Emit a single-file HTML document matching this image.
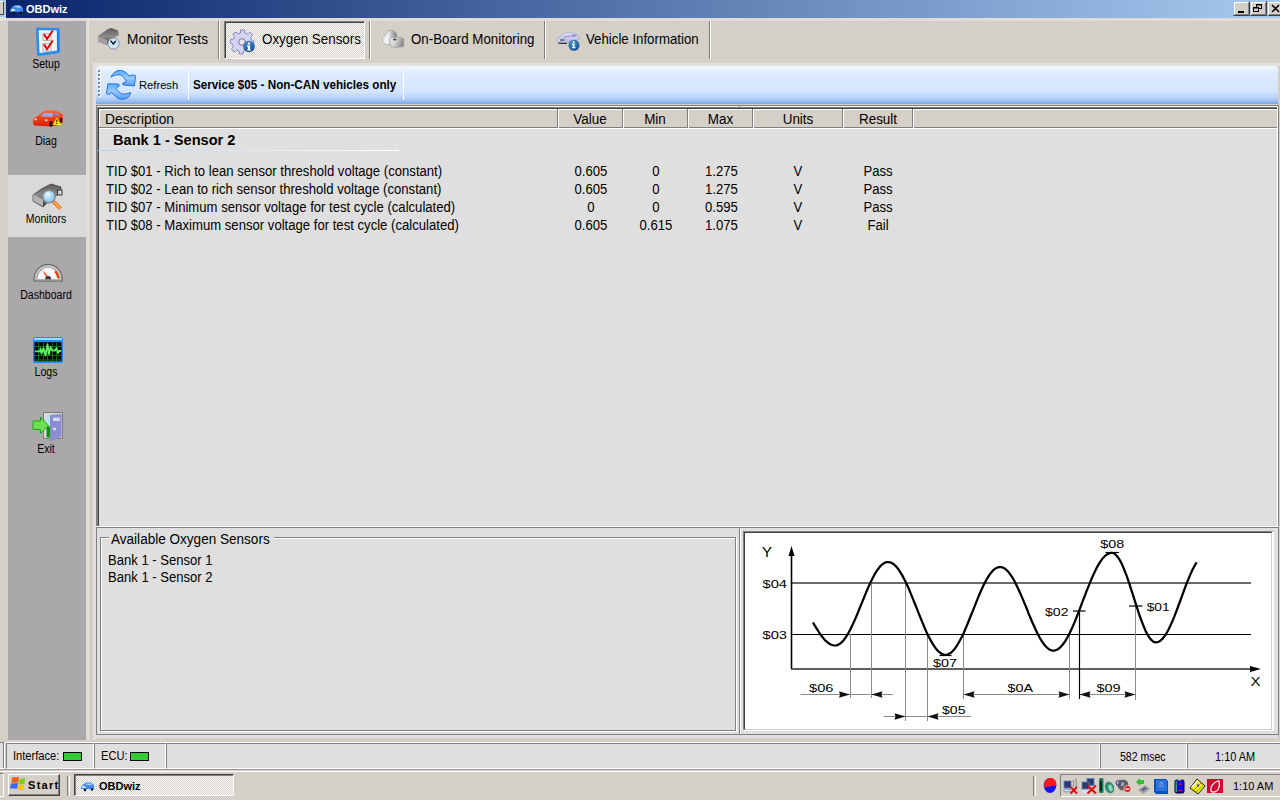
<!DOCTYPE html>
<html><head><meta charset="utf-8">
<style>
*{margin:0;padding:0;box-sizing:border-box}
html,body{width:1280px;height:800px;overflow:hidden;background:#D4D0C8;font-family:"Liberation Sans",sans-serif;color:#000}
.a{position:absolute}
.t{position:absolute;white-space:pre;line-height:1}
</style></head><body>

<!-- left edge of another window's title -->
<div class="a" style="left:0;top:0;width:6px;height:17px;background:#A6CAF0"></div>
<div class="a" style="left:0;top:1px;width:4px;height:14px;background:#D4D0C8;border-right:1px solid #404040;border-bottom:1px solid #404040;border-top:1px solid #fff"></div>
<div class="a" style="left:0;top:17px;width:6px;height:4px;background:#E2E1DD"></div>

<!-- title bar -->
<div class="a" style="left:6px;top:0;width:1274px;height:18px;background:linear-gradient(to right,#0A246A,#A6CAF0)"></div>
<div class="a" style="left:6px;top:18px;width:1274px;height:3px;background:#DFDCD7"></div>
<div id="titlecar" class="a" style="left:9px;top:3px;width:15px;height:11px"></div>
<div class="t" style="left:26px;top:3.69px;font-size:11px;font-weight:bold;color:#fff">OBDwiz</div>

<!-- sidebar -->
<div class="a" style="left:8px;top:21px;width:78px;height:719px;background:#ABA8AC"></div>
<div class="a" style="left:8px;top:175px;width:78px;height:62px;background:#D9D9D9"></div>
<div class="a" style="left:86px;top:21px;width:2px;height:719px;background:#DEDCD7"></div><div class="a" style="left:88px;top:19px;width:1px;height:721px;background:#E6E5E1"></div>
<div class="a" style="left:93px;top:63px;width:1187px;height:3px;background:#E2E1DE"></div><div class="a" style="left:93px;top:63px;width:3px;height:677px;background:#E0E0E0"></div>

<!-- sidebar labels -->
<div class="t" style="left:7px;top:57.84px;font-size:12px;width:78px;text-align:center;transform:scaleX(0.88);transform-origin:50% 0">Setup</div>
<div class="t" style="left:7px;top:134.84px;font-size:12px;width:78px;text-align:center;transform:scaleX(0.88);transform-origin:50% 0">Diag</div>
<div class="t" style="left:7px;top:212.84px;font-size:12px;width:78px;text-align:center;transform:scaleX(0.88);transform-origin:50% 0">Monitors</div>
<div class="t" style="left:7px;top:288.84px;font-size:12px;width:78px;text-align:center;transform:scaleX(0.88);transform-origin:50% 0">Dashboard</div>
<div class="t" style="left:7px;top:365.84px;font-size:12px;width:78px;text-align:center;transform:scaleX(0.88);transform-origin:50% 0">Logs</div>
<div class="t" style="left:7px;top:442.84px;font-size:12px;width:78px;text-align:center;transform:scaleX(0.88);transform-origin:50% 0">Exit</div>

<!-- toolstrip tabs -->
<div class="t" style="left:127px;top:32.15px;font-size:14px;transform:scaleX(0.976);transform-origin:0 0">Monitor Tests</div>
<div class="a" style="left:218px;top:21px;width:1px;height:38px;background:#808080"></div>
<div class="a" style="left:219px;top:21px;width:1px;height:38px;background:#fff"></div>
<div class="a" style="left:224px;top:21px;width:141px;height:38px;background:repeating-conic-gradient(#fff 0 25%,#D4D0C8 0 50%) 0 0/2px 2px;border-top:1px solid #808080;border-left:1px solid #808080;border-right:1px solid #fff;border-bottom:1px solid #fff;box-shadow:inset 1px 1px 0 #404040"></div>
<div class="t" style="left:262px;top:32.15px;font-size:14px;transform:scaleX(0.956);transform-origin:0 0">Oxygen Sensors</div>
<div class="a" style="left:369px;top:21px;width:1px;height:38px;background:#808080"></div>
<div class="a" style="left:370px;top:21px;width:1px;height:38px;background:#fff"></div>
<div class="t" style="left:410.5px;top:32.15px;font-size:14px;transform:scaleX(0.95);transform-origin:0 0">On-Board Monitoring</div>
<div class="a" style="left:544px;top:21px;width:1px;height:38px;background:#808080"></div>
<div class="a" style="left:545px;top:21px;width:1px;height:38px;background:#fff"></div>
<div class="t" style="left:586px;top:32.15px;font-size:14px;transform:scaleX(0.946);transform-origin:0 0">Vehicle Information</div>
<div class="a" style="left:709px;top:21px;width:1px;height:38px;background:#808080"></div>
<div class="a" style="left:710px;top:21px;width:1px;height:38px;background:#fff"></div>

<!-- blue toolbar -->
<div class="a" style="left:96px;top:66px;width:1182px;height:38px;border-radius:3px 3px 0 0;background:linear-gradient(to bottom,#F0F6FF 0%,#DFEBFE 18%,#D3E4FD 68%,#B8D2F7 84%,#96B9F0 94%,#7CA3E6 100%)"></div>
<div class="t" style="left:139px;top:79.52px;font-size:11.2px">Refresh</div>
<div class="a" style="left:188px;top:71px;width:1px;height:29px;background:#fff"></div>
<div class="t" style="left:193px;top:78.84px;font-size:12px;font-weight:bold;transform:scaleX(0.974);transform-origin:0 0">Service $05 - Non-CAN vehicles only</div>
<div class="a" style="left:403px;top:71px;width:1px;height:29px;background:#fff"></div>

<!-- list view -->
<div class="a" style="left:96px;top:105px;width:1183px;height:421px;background:#DFDFDF;border-top:1px solid #808080;border-left:2px solid #808080;border-right:1px solid #808080"></div>
<div class="a" style="left:97px;top:106px;width:1181px;height:1px;background:#F2F2F2"></div>
<div class="a" style="left:98px;top:107px;width:1180px;height:1px;background:#808080"></div>
<div class="a" style="left:739px;top:106px;width:1px;height:1px;background:#808080"></div>
<div class="a" style="left:1277px;top:107px;width:1px;height:419px;background:#fff"></div>
<div class="a" style="left:98px;top:108px;width:1179px;height:418px;border-top:1px solid #404040;border-left:1px solid #404040"></div>
<div class="a" style="left:99px;top:109px;width:1178px;height:20px;background:#D4D0C8;border-bottom:1px solid #fff;box-shadow:inset 1px 1px 0 #fff"></div>
<div class="a" style="left:99px;top:127px;width:1178px;height:1px;background:#808080"></div>
<!-- header texts -->
<div class="t" style="left:105px;top:112.15px;font-size:14px;transform:scaleX(0.985);transform-origin:0 0">Description</div>
<div class="a" style="left:557px;top:109px;width:1px;height:19px;background:#808080"></div>
<div class="a" style="left:558px;top:109px;width:1px;height:19px;background:#fff"></div>
<div class="t" style="left:558px;top:112.15px;font-size:14px;width:64px;text-align:center;transform:scaleX(0.96);transform-origin:50% 0">Value</div>
<div class="a" style="left:622px;top:109px;width:1px;height:19px;background:#808080"></div>
<div class="a" style="left:623px;top:109px;width:1px;height:19px;background:#fff"></div>
<div class="t" style="left:623px;top:112.15px;font-size:14px;width:64px;text-align:center;transform:scaleX(0.96);transform-origin:50% 0">Min</div>
<div class="a" style="left:687px;top:109px;width:1px;height:19px;background:#808080"></div>
<div class="a" style="left:688px;top:109px;width:1px;height:19px;background:#fff"></div>
<div class="t" style="left:688px;top:112.15px;font-size:14px;width:65px;text-align:center;transform:scaleX(0.96);transform-origin:50% 0">Max</div>
<div class="a" style="left:752px;top:109px;width:1px;height:19px;background:#808080"></div>
<div class="a" style="left:753px;top:109px;width:1px;height:19px;background:#fff"></div>
<div class="t" style="left:753px;top:112.15px;font-size:14px;width:90px;text-align:center;transform:scaleX(0.96);transform-origin:50% 0">Units</div>
<div class="a" style="left:842px;top:109px;width:1px;height:19px;background:#808080"></div>
<div class="a" style="left:843px;top:109px;width:1px;height:19px;background:#fff"></div>
<div class="t" style="left:843px;top:112.15px;font-size:14px;width:70px;text-align:center;transform:scaleX(0.96);transform-origin:50% 0">Result</div>
<div class="a" style="left:912px;top:109px;width:1px;height:19px;background:#808080"></div>
<div class="a" style="left:913px;top:109px;width:1px;height:19px;background:#fff"></div>

<!-- group header -->
<div class="t" style="left:113px;top:132.64px;font-size:14.6px;font-weight:bold">Bank 1 - Sensor 2</div>
<div class="a" style="left:98px;top:150px;width:301px;height:1px;background:linear-gradient(to right,#B9D1EA,#fff)"></div>

<!-- rows -->
<div class="t" style="left:106px;top:164.15px;font-size:14px;transform:scaleX(0.937);transform-origin:0 0">TID $01 - Rich to lean sensor threshold voltage (constant)</div>
<div class="t" style="left:559px;top:164.15px;font-size:14px;width:64px;text-align:center;transform:scaleX(0.937);transform-origin:50% 0">0.605</div>
<div class="t" style="left:624px;top:164.15px;font-size:14px;width:64px;text-align:center;transform:scaleX(0.937);transform-origin:50% 0">0</div>
<div class="t" style="left:689px;top:164.15px;font-size:14px;width:65px;text-align:center;transform:scaleX(0.937);transform-origin:50% 0">1.275</div>
<div class="t" style="left:753px;top:164.15px;font-size:14px;width:90px;text-align:center;transform:scaleX(0.937);transform-origin:50% 0">V</div>
<div class="t" style="left:843px;top:164.15px;font-size:14px;width:70px;text-align:center;transform:scaleX(0.937);transform-origin:50% 0">Pass</div>
<div class="t" style="left:106px;top:182.15px;font-size:14px;transform:scaleX(0.937);transform-origin:0 0">TID $02 - Lean to rich sensor threshold voltage (constant)</div>
<div class="t" style="left:559px;top:182.15px;font-size:14px;width:64px;text-align:center;transform:scaleX(0.937);transform-origin:50% 0">0.605</div>
<div class="t" style="left:624px;top:182.15px;font-size:14px;width:64px;text-align:center;transform:scaleX(0.937);transform-origin:50% 0">0</div>
<div class="t" style="left:689px;top:182.15px;font-size:14px;width:65px;text-align:center;transform:scaleX(0.937);transform-origin:50% 0">1.275</div>
<div class="t" style="left:753px;top:182.15px;font-size:14px;width:90px;text-align:center;transform:scaleX(0.937);transform-origin:50% 0">V</div>
<div class="t" style="left:843px;top:182.15px;font-size:14px;width:70px;text-align:center;transform:scaleX(0.937);transform-origin:50% 0">Pass</div>
<div class="t" style="left:106px;top:200.15px;font-size:14px;transform:scaleX(0.937);transform-origin:0 0">TID $07 - Minimum sensor voltage for test cycle (calculated)</div>
<div class="t" style="left:559px;top:200.15px;font-size:14px;width:64px;text-align:center;transform:scaleX(0.937);transform-origin:50% 0">0</div>
<div class="t" style="left:624px;top:200.15px;font-size:14px;width:64px;text-align:center;transform:scaleX(0.937);transform-origin:50% 0">0</div>
<div class="t" style="left:689px;top:200.15px;font-size:14px;width:65px;text-align:center;transform:scaleX(0.937);transform-origin:50% 0">0.595</div>
<div class="t" style="left:753px;top:200.15px;font-size:14px;width:90px;text-align:center;transform:scaleX(0.937);transform-origin:50% 0">V</div>
<div class="t" style="left:843px;top:200.15px;font-size:14px;width:70px;text-align:center;transform:scaleX(0.937);transform-origin:50% 0">Pass</div>
<div class="t" style="left:106px;top:218.15px;font-size:14px;transform:scaleX(0.937);transform-origin:0 0">TID $08 - Maximum sensor voltage for test cycle (calculated)</div>
<div class="t" style="left:559px;top:218.15px;font-size:14px;width:64px;text-align:center;transform:scaleX(0.937);transform-origin:50% 0">0.605</div>
<div class="t" style="left:624px;top:218.15px;font-size:14px;width:64px;text-align:center;transform:scaleX(0.937);transform-origin:50% 0">0.615</div>
<div class="t" style="left:689px;top:218.15px;font-size:14px;width:65px;text-align:center;transform:scaleX(0.937);transform-origin:50% 0">1.075</div>
<div class="t" style="left:753px;top:218.15px;font-size:14px;width:90px;text-align:center;transform:scaleX(0.937);transform-origin:50% 0">V</div>
<div class="t" style="left:843px;top:218.15px;font-size:14px;width:70px;text-align:center;transform:scaleX(0.937);transform-origin:50% 0">Fail</div>

<!-- bottom panel -->
<div class="a" style="left:96px;top:526px;width:1182px;height:1px;background:#fff"></div>
<div class="a" style="left:96px;top:527px;width:1183px;height:208px;background:#DFDFDF;border:1px solid #808080"></div>
<div class="a" style="left:96px;top:735px;width:1182px;height:3px;background:#DFDFDF"></div>
<!-- group box -->
<div class="a" style="left:100px;top:537px;width:636px;height:194px;border:1px solid #808080;box-shadow:inset 1px 1px 0 #fff,1px 1px 0 #fff"></div>
<div class="a" style="left:109px;top:532px;width:165px;height:12px;background:#DFDFDF"></div>
<div class="t" style="left:111px;top:532.15px;font-size:14px;transform:scaleX(0.968);transform-origin:0 0">Available Oxygen Sensors</div>
<div class="t" style="left:107.5px;top:553.15px;font-size:14px;transform:scaleX(0.933);transform-origin:0 0">Bank 1 - Sensor 1</div>
<div class="t" style="left:107.5px;top:570.15px;font-size:14px;transform:scaleX(0.933);transform-origin:0 0">Bank 1 - Sensor 2</div>
<!-- splitter -->
<div class="a" style="left:739px;top:528px;width:1px;height:206px;background:#808080"></div>
<div class="a" style="left:740px;top:528px;width:1px;height:206px;background:#fff"></div>
<!-- picture box -->
<div class="a" style="left:743px;top:531px;width:531px;height:200px;border-top:1px solid #808080;border-left:1px solid #808080;border-right:2px solid #fff;border-bottom:2px solid #fff"></div>
<div class="a" style="left:744px;top:532px;width:528px;height:198px;background:#fff;border-top:1px solid #404040;border-left:1px solid #404040;border-right:1px solid #D4D0C8;border-bottom:1px solid #D4D0C8"></div>

<!-- status bar -->
<div class="a" style="left:0;top:742px;width:1280px;height:1px;background:#fff"></div>
<div class="a" style="left:0;top:742px;width:5px;height:27px;background:#DFDFDF;border-top:1px solid #808080;border-right:1px solid #fff;border-bottom:1px solid #fff;box-shadow:inset -1px 0 0 #808080"></div>
<div class="a" style="left:6px;top:743px;width:88px;height:26px;background:#DFDFDF;border-top:1px solid #808080;border-left:1px solid #808080;border-right:1px solid #fff;border-bottom:1px solid #fff"></div>
<div class="t" style="left:12.5px;top:749.84px;font-size:12px;transform:scaleX(0.927);transform-origin:0 0">Interface:</div>
<div class="a" style="left:63px;top:752px;width:19px;height:9px;background:#33CC33;border:1px solid #000"></div>
<div class="a" style="left:94px;top:743px;width:72px;height:26px;background:#DFDFDF;border-top:1px solid #808080;border-left:1px solid #808080;border-right:1px solid #fff;border-bottom:1px solid #fff"></div>
<div class="t" style="left:100.5px;top:749.84px;font-size:12px;transform:scaleX(0.927);transform-origin:0 0">ECU:</div>
<div class="a" style="left:130px;top:752px;width:19px;height:9px;background:#33CC33;border:1px solid #000"></div>
<div class="a" style="left:166px;top:743px;width:934px;height:26px;background:#DFDFDF;border-top:1px solid #808080;border-left:1px solid #808080;border-right:1px solid #fff;border-bottom:1px solid #fff"></div>
<div class="a" style="left:1100px;top:743px;width:87px;height:26px;background:#DFDFDF;border-top:1px solid #808080;border-left:1px solid #808080;border-right:1px solid #fff;border-bottom:1px solid #fff"></div>
<div class="t" style="left:1120px;top:750.84px;font-size:12px;transform:scaleX(0.875);transform-origin:0 0">582 msec</div>
<div class="a" style="left:1187px;top:743px;width:93px;height:26px;background:#DFDFDF;border-top:1px solid #808080;border-left:1px solid #808080;border-bottom:1px solid #fff"></div>
<div class="t" style="left:1214.5px;top:750.84px;font-size:12px;transform:scaleX(0.914);transform-origin:0 0">1:10 AM</div>

<!-- taskbar -->
<div class="a" style="left:0;top:770px;width:1280px;height:30px;background:#D4D0C8;border-top:1px solid #D4D0C8"></div>
<div class="a" style="left:0;top:769px;width:1280px;height:1px;background:#9A9996"></div><div class="a" style="left:0;top:771px;width:1280px;height:1px;background:#fff"></div>
<div class="a" style="left:0;top:773px;width:4px;height:24px;border-top:1px solid #808080;border-right:1px solid #fff;border-bottom:1px solid #fff"></div>
<div class="a" style="left:8px;top:774px;width:52px;height:22px;background:#D4D0C8;border-top:1px solid #fff;border-left:1px solid #fff;border-right:1px solid #404040;border-bottom:1px solid #404040;box-shadow:inset -1px -1px 0 #808080"></div>
<div class="t" style="left:28px;top:779.69px;font-size:11px;font-weight:bold;letter-spacing:1.3px">Start</div>
<div class="a" style="left:67px;top:776px;width:3px;height:20px;border-left:1px solid #808080;border-right:1px solid #fff"></div>
<div class="a" style="left:74px;top:774px;width:160px;height:22px;background:repeating-conic-gradient(#fff 0 25%,#D4D0C8 0 50%) 0 0/2px 2px;border-top:1px solid #404040;border-left:1px solid #404040;border-right:1px solid #fff;border-bottom:1px solid #fff;box-shadow:inset 1px 1px 0 #808080"></div>
<div class="t" style="left:99px;top:780.69px;font-size:11px;font-weight:bold">OBDwiz</div>
<div class="a" style="left:1033px;top:776px;width:3px;height:20px;border-left:1px solid #808080;border-right:1px solid #fff"></div>
<div class="a" style="left:1060px;top:774px;width:220px;height:23px;border-top:1px solid #808080;border-left:1px solid #808080;border-bottom:1px solid #fff"></div>
<div class="t" style="left:1233px;top:780.69px;font-size:11px">1:10 AM</div>
<!-- CHART -->
<svg class="a" style="left:745px;top:533px" width="526" height="197" viewBox="745 533 526 197">
<g fill="none" stroke-linecap="butt">
<line x1="791" y1="583" x2="1251" y2="583" stroke="#6A6A6A" stroke-width="2"/>
<line x1="791" y1="634.5" x2="1251" y2="634.5" stroke="#000" stroke-width="1"/>
<line x1="791.5" y1="553" x2="791.5" y2="669" stroke="#000" stroke-width="1.6"/>
<line x1="791" y1="669" x2="1252" y2="669" stroke="#2A2A2A" stroke-width="1.7"/>
<g stroke="#8C8C8C" stroke-width="1">
<line x1="850.5" y1="634" x2="850.5" y2="698"/>
<line x1="871.5" y1="583" x2="871.5" y2="698"/>
<line x1="905.5" y1="583" x2="905.5" y2="721"/>
<line x1="927.5" y1="634" x2="927.5" y2="721"/>
<line x1="963.5" y1="634" x2="963.5" y2="699"/>
<line x1="1069.5" y1="634" x2="1069.5" y2="699"/>
<line x1="1135.5" y1="606" x2="1135.5" y2="700"/>
<line x1="800.5" y1="694.5" x2="893" y2="694.5"/>
<line x1="883.5" y1="716.5" x2="971" y2="716.5"/>
<line x1="963.5" y1="694.5" x2="1069.5" y2="694.5"/>
<line x1="1079.5" y1="694.5" x2="1135.5" y2="694.5"/>
</g>
<line x1="1079.5" y1="611" x2="1079.5" y2="699" stroke="#000" stroke-width="1.2"/>
<g stroke="#000" stroke-width="1.2">
<line x1="1105.5" y1="552.5" x2="1119" y2="552.5"/>
<line x1="939.5" y1="655.5" x2="951.5" y2="655.5"/>
<line x1="1073" y1="611" x2="1085.5" y2="611"/>
<line x1="1129" y1="606" x2="1142.5" y2="606"/>
</g>
<path d="M813.0,622.5 L814.8,625.6 L816.7,628.6 L818.5,631.5 L820.3,634.2 L822.2,636.7 L824.0,638.9 L825.8,640.9 L827.7,642.5 L829.5,643.8 L831.3,644.7 L833.2,645.3 L835.0,645.5 L836.8,645.3 L838.5,644.6 L840.3,643.5 L842.1,641.9 L843.8,639.9 L845.6,637.5 L847.4,634.8 L849.1,631.7 L850.9,628.3 L852.7,624.6 L854.4,620.7 L856.2,616.7 L858.0,612.4 L859.7,608.1 L861.5,603.8 L863.3,599.4 L865.0,595.1 L866.8,590.8 L868.6,586.8 L870.3,582.9 L872.1,579.2 L873.9,575.8 L875.6,572.7 L877.4,570.0 L879.2,567.6 L880.9,565.6 L882.7,564.0 L884.5,562.9 L886.2,562.2 L888.0,562.0 L889.9,562.3 L891.8,563.0 L893.8,564.3 L895.7,566.0 L897.6,568.2 L899.5,570.9 L901.4,573.9 L903.3,577.4 L905.2,581.1 L907.2,585.2 L909.1,589.5 L911.0,594.1 L912.9,598.8 L914.8,603.5 L916.8,608.4 L918.7,613.3 L920.6,618.0 L922.5,622.7 L924.4,627.3 L926.3,631.6 L928.2,635.7 L930.2,639.4 L932.1,642.9 L934.0,645.9 L935.9,648.6 L937.8,650.8 L939.8,652.5 L941.7,653.8 L943.6,654.5 L945.5,654.8 L947.3,654.6 L949.1,653.8 L951.0,652.7 L952.8,651.0 L954.6,648.9 L956.4,646.4 L958.2,643.5 L960.0,640.3 L961.9,636.7 L963.7,632.9 L965.5,628.8 L967.3,624.5 L969.1,620.0 L970.9,615.5 L972.8,610.9 L974.6,606.3 L976.4,601.8 L978.2,597.3 L980.0,593.0 L981.8,589.0 L983.6,585.1 L985.5,581.5 L987.3,578.3 L989.1,575.4 L990.9,572.9 L992.7,570.8 L994.5,569.1 L996.4,568.0 L998.2,567.2 L1000.0,567.0 L1001.8,567.2 L1003.6,567.9 L1005.4,569.0 L1007.1,570.6 L1008.9,572.6 L1010.7,575.0 L1012.5,577.7 L1014.3,580.8 L1016.0,584.2 L1017.8,587.9 L1019.6,591.8 L1021.4,595.9 L1023.2,600.1 L1025.0,604.4 L1026.8,608.8 L1028.5,613.2 L1030.3,617.5 L1032.1,621.7 L1033.9,625.8 L1035.7,629.7 L1037.5,633.4 L1039.2,636.8 L1041.0,639.9 L1042.8,642.6 L1044.6,645.0 L1046.4,647.0 L1048.2,648.6 L1049.9,649.7 L1051.7,650.4 L1053.5,650.6 L1055.4,650.3 L1057.4,649.5 L1059.3,648.2 L1061.2,646.4 L1063.2,644.0 L1065.1,641.3 L1067.1,638.0 L1069.0,634.4 L1070.9,630.4 L1072.9,626.1 L1074.8,621.6 L1076.7,616.8 L1078.7,611.9 L1080.6,606.8 L1082.5,601.7 L1084.5,596.6 L1086.4,591.5 L1088.4,586.6 L1090.3,581.8 L1092.2,577.2 L1094.2,573.0 L1096.1,569.0 L1098.0,565.4 L1100.0,562.1 L1101.9,559.4 L1103.9,557.0 L1105.8,555.2 L1107.7,553.9 L1109.7,553.1 L1111.6,552.8 L1113.1,553.0 L1114.6,553.8 L1116.0,555.0 L1117.5,556.7 L1119.0,558.8 L1120.5,561.4 L1122.0,564.3 L1123.4,567.6 L1124.9,571.3 L1126.4,575.2 L1127.9,579.4 L1129.4,583.8 L1130.8,588.3 L1132.3,592.9 L1133.8,597.6 L1135.3,602.3 L1136.8,606.9 L1138.2,611.4 L1139.7,615.8 L1141.2,620.0 L1142.7,623.9 L1144.2,627.6 L1145.6,630.9 L1147.1,633.8 L1148.6,636.4 L1150.1,638.5 L1151.6,640.2 L1153.0,641.4 L1154.5,642.2 L1156.0,642.4 L1158.0,642.0 L1160.1,641.0 L1162.1,639.2 L1164.1,636.8 L1166.2,633.8 L1168.2,630.2 L1170.2,626.1 L1172.2,621.6 L1174.3,616.6 L1176.3,611.4 L1178.3,606.0 L1180.4,600.5 L1182.4,594.9 L1184.4,589.4 L1186.4,584.0 L1188.5,578.9 L1190.5,574.1 L1192.5,569.7 L1194.6,565.8 L1196.6,562.4" stroke="#000" stroke-width="2.25" stroke-linejoin="round"/>
</g>
<path d="M791.5,546 L788.5,556 L794.5,556 Z" fill="#000"/>
<path d="M1261,669 L1250,666 L1250,672 Z" fill="#000"/>
<path d="M850,694.5 L839,691.3 L840,694.5 L839,697.7 Z" fill="#111"/><path d="M871.5,694.5 L882.5,691.3 L881.5,694.5 L882.5,697.7 Z" fill="#111"/>
<path d="M905.5,716.5 L894.5,713.3 L895.5,716.5 L894.5,719.7 Z" fill="#111"/><path d="M927.5,716.5 L938.5,713.3 L937.5,716.5 L938.5,719.7 Z" fill="#111"/>
<path d="M963.5,694.5 L974.5,691.3 L973.5,694.5 L974.5,697.7 Z" fill="#111"/><path d="M1069.5,694.5 L1058.5,691.3 L1059.5,694.5 L1058.5,697.7 Z" fill="#111"/>
<path d="M1079.5,694.5 L1090.5,691.3 L1089.5,694.5 L1090.5,697.7 Z" fill="#111"/><path d="M1135.5,694.5 L1124.5,691.3 L1125.5,694.5 L1124.5,697.7 Z" fill="#111"/>
<g font-family="Liberation Sans" font-size="10.5" fill="#000" lengthAdjust="spacingAndGlyphs">
<text x="762" y="557" font-size="14.5" textLength="10" lengthAdjust="spacingAndGlyphs">Y</text>
<text x="1250.5" y="686" font-size="12" textLength="10" lengthAdjust="spacingAndGlyphs">X</text>
<text x="762.5" y="587.5" textLength="24.5" lengthAdjust="spacingAndGlyphs">$04</text>
<text x="762.5" y="638.5" textLength="24.5" lengthAdjust="spacingAndGlyphs">$03</text>
<text x="933" y="666.5" textLength="24" lengthAdjust="spacingAndGlyphs">$07</text>
<text x="1100.3" y="548" textLength="24" lengthAdjust="spacingAndGlyphs">$08</text>
<text x="1045" y="616" textLength="23.5" lengthAdjust="spacingAndGlyphs">$02</text>
<text x="1146.7" y="610.5" textLength="23" lengthAdjust="spacingAndGlyphs">$01</text>
<text x="809" y="692" textLength="24.5" lengthAdjust="spacingAndGlyphs">$06</text>
<text x="942" y="714" textLength="23.5" lengthAdjust="spacingAndGlyphs">$05</text>
<text x="1007.5" y="692.3" textLength="25.5" lengthAdjust="spacingAndGlyphs">$0A</text>
<text x="1096.6" y="692.3" textLength="24" lengthAdjust="spacingAndGlyphs">$09</text>
</g>
</svg>
<!-- /CHART -->
<!-- ICONS -->
<svg class="a" style="left:0;top:0" width="1280" height="800" viewBox="0 0 1280 800">
<defs>
<linearGradient id="gBlueBtn" x1="0" y1="0" x2="0" y2="1"><stop offset="0" stop-color="#BFE0FF"/><stop offset="1" stop-color="#1E7FE0"/></linearGradient>
<linearGradient id="gDev" x1="0" y1="0" x2="0" y2="1"><stop offset="0" stop-color="#5A5A5A"/><stop offset="0.5" stop-color="#8A8A8A"/><stop offset="1" stop-color="#3A3A3A"/></linearGradient>
<radialGradient id="gLens" cx="0.4" cy="0.35" r="0.7"><stop offset="0" stop-color="#F0FAFF"/><stop offset="0.5" stop-color="#A8D8F8"/><stop offset="1" stop-color="#7FB8E8"/></radialGradient>
<linearGradient id="gRed" x1="0" y1="0" x2="0" y2="1"><stop offset="0" stop-color="#FF6A30"/><stop offset="1" stop-color="#D81800"/></linearGradient>
<radialGradient id="gInfo" cx="0.4" cy="0.3" r="0.8"><stop offset="0" stop-color="#4A90D0"/><stop offset="1" stop-color="#0E4A8A"/></radialGradient>
<linearGradient id="gRef" x1="0" y1="0" x2="0" y2="1"><stop offset="0" stop-color="#5AAEF8"/><stop offset="0.5" stop-color="#9CCBFF"/><stop offset="1" stop-color="#4A9CF4"/></linearGradient>
<linearGradient id="gNut1" x1="0" y1="0" x2="1" y2="0"><stop offset="0" stop-color="#E0E0E0"/><stop offset="0.35" stop-color="#F4F4F4"/><stop offset="1" stop-color="#7A7A7A"/></linearGradient>
<linearGradient id="gNut2" x1="0" y1="0" x2="1" y2="0.3"><stop offset="0" stop-color="#F2F2F2"/><stop offset="0.5" stop-color="#D0D0D0"/><stop offset="1" stop-color="#8A8A8A"/></linearGradient>
<linearGradient id="gVeh" x1="0" y1="0" x2="0" y2="1"><stop offset="0" stop-color="#ECECFA"/><stop offset="1" stop-color="#A8A8D8"/></linearGradient>
</defs>

<!-- title car -->
<g transform="translate(9,3)">
<path d="M1,7 L3,4 L6,2 L11,2 L14,5 L14,9 L1,9 Z" fill="#3C8CF0"/>
<path d="M5,4 L7,3 L11,3 L12,5 Z" fill="#B8C8F0"/>
<ellipse cx="4" cy="7" rx="2" ry="1" fill="#F0F0F0"/>
<circle cx="5" cy="10" r="1.3" fill="#111"/><circle cx="12" cy="9.5" r="1.2" fill="#111"/>
</g>

<!-- Setup -->
<g transform="translate(32,24)">
<path d="M5.3,4.8 L26.4,5.3 L26.8,27.6 L6.3,30.6 Z" fill="#F6F4F6" stroke="#2A8EEA" stroke-width="2.6" stroke-linejoin="round"/>
<path d="M25.4,6 L25.6,27.2" stroke="#1E7EE0" stroke-width="1.2"/>
<rect x="11" y="9.5" width="8" height="7" fill="none" stroke="#B8B8B8" stroke-width="1.2"/>
<rect x="11" y="19.5" width="8" height="7.5" fill="none" stroke="#B8B8B8" stroke-width="1.2"/>
<path d="M12,10.2 L15,15 L20.8,6.5" fill="none" stroke="#E00000" stroke-width="2"/>
<path d="M12,20.2 L15,25.2 L20.8,16.5" fill="none" stroke="#E00000" stroke-width="2"/>
</g>

<!-- Diag car -->
<g transform="translate(30,104)">
<path d="M3,15 L9,11 L15,6.5 L22,6 L28,7.5 L33,10.5 L33,18.5 L27,21.5 L20,22.5 L4,21.5 L3,19 Z" fill="url(#gRed)"/>
<path d="M10.5,12.5 L14,9 L23,9 L22.5,13 Z" fill="#9AA8F0"/>
<ellipse cx="26.5" cy="10.5" rx="2.6" ry="1.3" fill="#7090E0"/>
<ellipse cx="5.6" cy="15.4" rx="1.3" ry="0.9" fill="#F0E8F0"/>
<ellipse cx="16.2" cy="16.2" rx="1.3" ry="1" fill="#F0E8F0"/>
<ellipse cx="21" cy="20" rx="1.6" ry="3" fill="#202020"/>
<ellipse cx="31" cy="16" rx="1.2" ry="2.6" fill="#202020"/>
<path d="M22.8,21 L26.8,13.2 L31,21 Z" fill="#F8F000"/>
<rect x="26.3" y="15.5" width="1" height="2.8" fill="#000"/><rect x="26.3" y="19" width="1" height="1" fill="#000"/>
</g>

<!-- Monitors -->
<g transform="translate(30,180)">
<path d="M3,15 L12,8.5 L21,4 L31,7 L31,12 L26,16 L17,23 L13,27 L3,21 Z" fill="url(#gDev)" stroke="#3A3A3A" stroke-width="0.7"/>
<path d="M3.3,15.2 L13,20 L13,26.6 L3.3,20.8 Z" fill="#B4B4B4"/>
<path d="M3.3,15.2 L13,20 L22,13" fill="none" stroke="#D0D0D0" stroke-width="0.6"/>
<rect x="27.5" y="10" width="4.5" height="5" fill="#D0D0D0" stroke="#303030" stroke-width="0.9"/>
<circle cx="19" cy="16.5" r="6.2" fill="url(#gLens)" stroke="#8A8A8A" stroke-width="1.4"/>
<path d="M23.4,21.4 L30.4,28.8" stroke="#F26A1A" stroke-width="3.6" stroke-linecap="butt"/>
<path d="M24,22 L30,28.4" stroke="#FFC850" stroke-width="1.2"/>
<path d="M30.4,28.8 L31.4,29.9" stroke="#D0D0D0" stroke-width="3.2"/>
</g>

<!-- Dashboard -->
<g transform="translate(30,260)">
<path d="M3.5,21.6 L3.5,19 A14.6,15 0 0 1 32.7,19 L32.7,21.6 Z" fill="#5E5E5E"/>
<path d="M4.6,20.4 L4.6,19 A13.5,14 0 0 1 31.6,19 L31.6,20.4 Z" fill="#C4C4C4"/>
<path d="M6.6,19.4 A11.5,12 0 0 1 29.6,19.4 Z" fill="#6A6A6A"/>
<path d="M7.2,19.2 A10.9,11.4 0 0 1 29,19.2 Z" fill="#FAFAFF"/>
<path d="M12,9.6 L18,16.2 L16.2,17.6 Z" fill="#FF4A10"/>
<path d="M15.2,19.2 A3,3.2 0 0 1 21.2,19.2 Z" fill="#3A3A3A"/>
<path d="M25.2,11.2 A11,11 0 0 1 28.2,18.2" fill="none" stroke="#FF3A00" stroke-width="2.2"/>
</g>

<!-- Logs -->
<g transform="translate(33,337)">
<rect x="0" y="0" width="30" height="26" rx="1.5" fill="#1C8CF4"/>
<rect x="1" y="1" width="28" height="2" fill="#A8D4FF"/>
<rect x="1.5" y="5.2" width="27" height="19" fill="#000"/>
<g stroke="#0A7A0A" stroke-width="0.9">
<line x1="5.5" y1="5.5" x2="5.5" y2="24"/><line x1="10.5" y1="5.5" x2="10.5" y2="24"/><line x1="14.5" y1="5.5" x2="14.5" y2="24"/><line x1="19.5" y1="5.5" x2="19.5" y2="24"/><line x1="23.5" y1="5.5" x2="23.5" y2="24"/>
<line x1="1.5" y1="9.5" x2="28.5" y2="9.5"/><line x1="1.5" y1="18.5" x2="28.5" y2="18.5"/><line x1="1.5" y1="23" x2="28.5" y2="23"/>
</g>
<path d="M2,14.3 L7,14.3 L7.5,11.5 L8.5,16.5 L10.5,11 L12.5,18.5 L14.5,7.5 L16,17 L17.5,10 L19,13.5 L22,13.5 L23.5,11 L25,16 L26,14 L28,14" fill="none" stroke="#5CF05C" stroke-width="1.8" stroke-linejoin="round"/>
</g>

<!-- Exit -->
<g transform="translate(30,408)">
<rect x="13.5" y="4.5" width="19" height="26" fill="#D8D8D8" stroke="#7A7A7A" stroke-width="1"/>
<rect x="16.5" y="7.5" width="4" height="11" fill="#B8E0F8"/>
<rect x="16.5" y="18.5" width="4" height="11" fill="#109010"/>
<path d="M20,7 L31.5,6 L31.5,29 L20,33.5 Z" fill="#8C8CD2"/>
<rect x="23" y="9.5" width="7" height="3.5" fill="#D8D8F4"/>
<circle cx="24.5" cy="21" r="1.4" fill="#E8E8E8"/>
<path d="M3,13 L10.5,13 L10.5,9 L18.5,17.5 L10.5,25.5 L10.5,21.5 L3,21.5 Z" fill="#6CE050" stroke="#20A020" stroke-width="1"/>
</g>

<!-- tab: Monitor Tests -->
<g transform="translate(96,24)">
<path d="M2,12 L12,5 L15.5,4 L22,6.5 L23,11 L13,17 L11,21 L2,17.5 Z" fill="url(#gDev)"/>
<path d="M2,12 L11,16 L11,21 L2,17.5 Z" fill="#A0A0A0"/>
<circle cx="17.5" cy="19.5" r="5.6" fill="#C8E8FC" stroke="#8A8AA0" stroke-width="1"/>
<path d="M14.5,16.7 L17.3,20 L19.8,17" fill="none" stroke="#000" stroke-width="1.2"/>
</g>

<!-- tab: Oxygen Sensors gear -->
<g transform="translate(228,26)">
<path id="gear" d="M12.5,4 L16.5,4 L17,7 L19.5,8 L22,6.2 L24.5,9 L22.8,11.5 L23.5,14 L26,15 L25.5,18.5 L22.5,19 L21.5,21.5 L23,24 L20,26 L18,24 L15.5,25 L15,28 L11.5,28 L11,25 L8.5,24 L6,26 L3.5,23 L5.2,20.5 L4.5,18 L2,17 L2.5,13.5 L5.5,13 L6.5,10.5 L5,8 L8,6 L10,8 L12.5,7 Z" fill="#D4D4F2" stroke="#8888C8" stroke-width="1"/>
<circle cx="14" cy="16" r="3.3" fill="#E6E4E0" stroke="#7070B0" stroke-width="1"/>
<circle cx="21" cy="20.5" r="5.8" fill="url(#gInfo)"/>
<rect x="20" y="16.5" width="2" height="2" fill="#fff"/>
<path d="M19,19.5 L22,19.5 L22,23.5 L23,23.5 L23,24.5 L19,24.5 L19,23.5 L20,23.5 L20,20.5 L19,20.5 Z" fill="#fff"/>
</g>

<!-- tab: On-Board Monitoring nuts -->
<g transform="translate(378,26)">
<path d="M4.2,12 L8,8.5 L10.5,4.5 L14.5,4 L18.5,7.5 L19,10.5 L15,12 L12,17 L11.5,18.5 L7.5,18.5 L4.5,16 Z" fill="url(#gNut1)" stroke="#9A9A9A" stroke-width="0.6"/>
<path d="M12.2,13.5 L14,11.5 L22,11.3 L25.8,12.5 L25.8,20 L24.5,20.8 L17,21.5 L13,20.5 L12.2,17 Z" fill="url(#gNut2)" stroke="#9A9A9A" stroke-width="0.6"/>
<ellipse cx="16.8" cy="13.4" rx="2" ry="1" fill="#505050"/>
</g>

<!-- tab: Vehicle Information -->
<g transform="translate(552,28)">
<path d="M5,12 L6.5,9.5 L10,7 L14,5 L22,5 L26.5,8 L27,11 L24,13 L17,14.5 L7,15.5 L5.5,14.5 Z" fill="url(#gVeh)" stroke="#9A9AC8" stroke-width="0.6"/>
<path d="M10.5,10 L12,8 L18,7 L18.5,9.3 Z" fill="#A8A8E8"/>
<path d="M19,6.5 L24,6.5 L25,8.5 L19.5,9 Z" fill="#9090D0"/>
<rect x="8" y="11.2" width="4.5" height="1.6" fill="#6A6A70"/>
<ellipse cx="6.6" cy="12.2" rx="1" ry="0.9" fill="#E0FFFF"/>
<path d="M6.5,15.2 L15,15.6" stroke="#202020" stroke-width="1"/>
<circle cx="22" cy="17.3" r="5.5" fill="url(#gInfo)"/>
<rect x="20.9" y="13.1" width="1.7" height="1.6" fill="#fff"/>
<path d="M19.8,15.5 L22.6,15.5 L22.6,19.2 L23.6,19.2 L23.6,20.2 L19.8,20.2 L19.8,19.2 L20.8,19.2 L20.8,16.4 L19.8,16.4 Z" fill="#fff"/>
</g>

<!-- grip dots -->
<g><rect x="99" y="71" width="2" height="2" fill="#fff"/><rect x="98" y="70" width="2" height="2" fill="#8C8A88"/><rect x="99" y="75" width="2" height="2" fill="#fff"/><rect x="98" y="74" width="2" height="2" fill="#8C8A88"/><rect x="99" y="79" width="2" height="2" fill="#fff"/><rect x="98" y="78" width="2" height="2" fill="#8C8A88"/><rect x="99" y="83" width="2" height="2" fill="#fff"/><rect x="98" y="82" width="2" height="2" fill="#8C8A88"/><rect x="99" y="87" width="2" height="2" fill="#fff"/><rect x="98" y="86" width="2" height="2" fill="#8C8A88"/><rect x="99" y="91" width="2" height="2" fill="#fff"/><rect x="98" y="90" width="2" height="2" fill="#8C8A88"/><rect x="99" y="95" width="2" height="2" fill="#fff"/><rect x="98" y="94" width="2" height="2" fill="#8C8A88"/></g>
<!-- Refresh -->
<g transform="translate(102,67)">
<path d="M9.2,10.1 C10,7 13,4 17.1,3.4 C20,3 24.5,5 27,9 L31.1,7.9 L33.6,8.8 L32.4,18.9 L21.2,18 L20.5,16.2 L24.3,14.9 C23.5,12.5 22.5,11 21.6,10.4 C20,8.5 18.5,7.9 17.1,7.9 C15.5,7.8 14,8 13.1,8.3 C11.5,8.8 10,9.5 9.2,10.1 Z" fill="url(#gRef)" stroke="#1A64D8" stroke-width="0.9" stroke-linejoin="round"/>
<path d="M28.6,25.5 C28,28 27,30 25.7,30.6 C23.5,32 21,32.5 18.9,32.2 C16.5,31.8 15,30.8 13.5,29.3 C12,28 10.5,26.5 9.7,25.5 L6.8,27.5 L4.5,26.6 L5.9,16.7 L16.7,17.1 L17.3,18.9 L14,21.2 C14.8,23 15.5,24 16.7,24.5 C18,25.8 19.5,26.8 20.7,27 C22.5,27.3 24,27.1 25.2,26.6 C26.5,26.3 27.8,25.9 28.6,25.5 Z" fill="url(#gRef)" stroke="#1A64D8" stroke-width="0.9" stroke-linejoin="round"/>
</g>

<!-- title buttons -->
<g>
<rect x="1234" y="2" width="16" height="14" fill="#D4D0C8"/>
<path d="M1234,16 L1234,2 L1250,2" fill="none" stroke="#fff" stroke-width="1" transform="translate(0.5,0.5)"/>
<path d="M1233.5,15.5 L1249.5,15.5 L1249.5,1.5" fill="none" stroke="#404040" stroke-width="1"/>
<path d="M1234.5,14.5 L1248.5,14.5 L1248.5,2.5" fill="none" stroke="#808080" stroke-width="1"/>
<rect x="1238" y="11" width="6" height="2" fill="#000"/>
<rect x="1251" y="2" width="16" height="14" fill="#D4D0C8"/>
<path d="M1251.5,15 L1251.5,2.5 L1266,2.5" fill="none" stroke="#fff" stroke-width="1"/>
<path d="M1250.5,15.5 L1266.5,15.5 L1266.5,1.5" fill="none" stroke="#404040" stroke-width="1"/>
<path d="M1251.5,14.5 L1265.5,14.5 L1265.5,2.5" fill="none" stroke="#808080" stroke-width="1"/>
<rect x="1256.5" y="4.5" width="5" height="4" fill="none" stroke="#000" stroke-width="1"/><rect x="1256" y="4" width="6" height="1.5" fill="#000"/>
<rect x="1253.5" y="7.5" width="5" height="4" fill="#D4D0C8" stroke="#000" stroke-width="1"/><rect x="1253" y="7" width="6" height="1.5" fill="#000"/>
<rect x="1268" y="2" width="14" height="14" fill="#D4D0C8"/>
<path d="M1268.5,15 L1268.5,2.5 L1280,2.5" fill="none" stroke="#fff" stroke-width="1"/>
<path d="M1268,15.5 L1280,15.5" fill="none" stroke="#404040" stroke-width="1"/>
<path d="M1269,14.5 L1280,14.5" fill="none" stroke="#808080" stroke-width="1"/>
<path d="M1272,5 L1279,12 M1279,5 L1272,12" stroke="#000" stroke-width="1.6"/>
</g>
</svg>

<!-- /ICONS -->
<!-- TASK -->
<svg class="a" style="left:0;top:770px" width="1280" height="30" viewBox="0 770 1280 30">
<!-- start logo -->
<g transform="translate(6,772)">
<path d="M6,5.5 L13,5 L12.5,10.5 L5.5,11 Z" fill="#F0601A"/>
<path d="M13.5,7 L19,6 L18.5,12 L13,12.5 Z" fill="#7CD010"/>
<path d="M5,11.5 L12,11 L11.5,16.8 L4,16.2 Z" fill="#3A6AF0"/>
<path d="M12,13 L18,12.5 L17.5,18 L11,17.6 Z" fill="#F8C800"/>
</g>
<!-- task button car -->
<g transform="translate(80,781)">
<path d="M1,6 L3,3.5 L6,1.5 L11,1.5 L14,4 L14,8 L1,8 Z" fill="#3C8CF0"/>
<path d="M5,3.5 L7,2.5 L11,2.5 L12,4.5 Z" fill="#B8C8F0"/>
<ellipse cx="3.8" cy="6" rx="2" ry="1" fill="#F0F0F0"/>
<circle cx="5" cy="9" r="1.3" fill="#111"/><circle cx="12" cy="8.5" r="1.2" fill="#111"/>
</g>
<!-- tray -->
<ellipse cx="1050" cy="785.5" rx="6.3" ry="7.6" fill="#1414F0"/>
<path d="M1044.2,783.5 C1045,779.5 1048,778 1051,778 C1054,778 1056.3,780.5 1056.3,784 L1056.3,786 C1053,785 1049,786.5 1044.2,787.5 Z" fill="#FF1818"/>
<g transform="translate(1063,778)">
<rect x="1" y="3" width="7" height="7" fill="#303870" stroke="#6080C0" stroke-width="0.8"/>
<ellipse cx="4" cy="12.5" rx="3.5" ry="1.5" fill="#D8E0F8" stroke="#405090" stroke-width="0.6"/>
<path d="M10,2 Q12,5 10,9 M12.5,0.5 Q15,5 12.5,10" fill="none" stroke="#808080" stroke-width="0.9"/>
<path d="M7.5,9 L14,15.5 M14,9 L7.5,15.5" stroke="#E01010" stroke-width="2"/>
</g>
<g transform="translate(1081,778)">
<rect x="6" y="0.5" width="7" height="7" fill="#303870" stroke="#6080C0" stroke-width="0.8"/>
<rect x="1" y="4" width="7" height="7" fill="#303870" stroke="#6080C0" stroke-width="0.8"/>
<ellipse cx="4" cy="13.5" rx="3.5" ry="1.5" fill="#D8E0F8"/>
<path d="M6.5,7.5 L15,15.5 M15,7.5 L6.5,15.5" stroke="#E01010" stroke-width="2.2"/>
</g>
<rect x="1099" y="778" width="4.5" height="15" rx="1.5" fill="#207860"/>
<rect x="1100" y="781" width="2" height="10" fill="#202020"/>
<ellipse cx="1109.5" cy="787.5" rx="4.5" ry="6" fill="#2E8C70" transform="rotate(-20 1109.5 787.5)"/>
<ellipse cx="1110.5" cy="788" rx="2" ry="3.5" fill="#90D0C0" transform="rotate(-20 1110.5 788)"/>
<circle cx="1123" cy="785" r="5.5" fill="#606060"/><circle cx="1122" cy="784" r="2" fill="#B0B0B0"/>
<circle cx="1118.5" cy="783" r="2.5" fill="none" stroke="#303890" stroke-width="1"/>
<circle cx="1127.5" cy="789" r="3.6" fill="#E02020" stroke="#fff" stroke-width="0.6"/><rect x="1125.5" y="788.3" width="4" height="1.4" fill="#fff"/>
<g transform="translate(1136,778)">
<path d="M0,4 L4,0 L4,2 L8,2 L8,6 L4,6 L4,8 Z" fill="#30C030"/>
<path d="M2,12 L9,7 L14,11 L7,16 Z" fill="#A0A0A0"/>
<path d="M5,11.5 L9,9 L11,10.5 L7,13 Z" fill="#5060A0"/>
</g>
<g transform="translate(1153,778)">
<path d="M1,1 L13,1 L15,3 L15,16 L3,16 L1,14 Z" fill="#0850C8"/>
<rect x="3" y="2" width="11" height="11" fill="#2C70D8"/>
<g fill="#B0C8F0"><circle cx="7" cy="6" r="0.7"/><circle cx="9.5" cy="6" r="0.7"/><circle cx="7" cy="8.5" r="0.7"/><circle cx="9.5" cy="8.5" r="0.7"/><circle cx="8.3" cy="4.5" r="0.7"/></g>
</g>
<g transform="translate(1174,778)">
<rect x="1" y="2" width="9" height="13" rx="1.5" fill="#0A0AE0" stroke="#000" stroke-width="1"/>
<rect x="3.5" y="0.5" width="4" height="2" fill="#C0C0C0"/>
<rect x="1.5" y="3" width="1.5" height="11" fill="#20A0A0"/>
<path d="M5,6 L7,6 M6,5 L6,7" stroke="#F02020" stroke-width="1"/><rect x="4.5" y="12" width="3" height="1" fill="#F02020"/>
</g>
<g transform="translate(1190,778)">
<path d="M0,10 L7,1 L15,8 L8,16 Z" fill="#F8F000" stroke="#202020" stroke-width="1"/>
<path d="M2,9 L8,2.5" stroke="#fff" stroke-width="1.5"/>
<path d="M4,12 L11,5 M6,14 L13,7.5" stroke="#808000" stroke-width="0.8"/>
<rect x="7" y="6.5" width="2" height="2" fill="#2040E0"/>
</g>
<g transform="translate(1207,779)">
<rect x="0" y="0" width="16" height="14" fill="#D80030"/>
<path d="M12,1.5 C7,3 3,7 4,12 C6,14 11,13 12,8 C13,5 12,3 12,1.5" fill="none" stroke="#fff" stroke-width="1.2"/>
</g>
</svg>

<!-- /TASK -->
</body></html>
